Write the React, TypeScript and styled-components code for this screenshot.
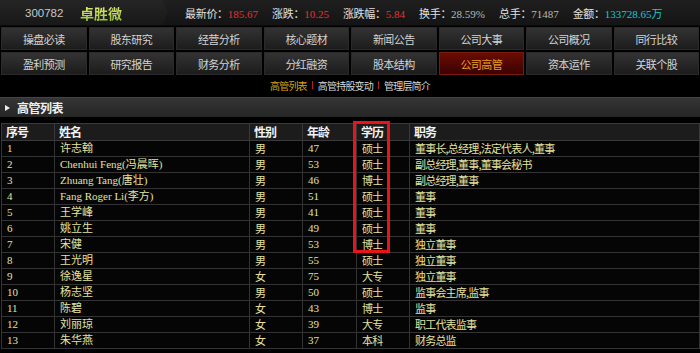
import React from "react";
import styled, { createGlobalStyle } from "styled-components";

const GlobalStyle = createGlobalStyle`
	html, body {
		margin: 0;
		padding: 0;
		background: #000;
	}
	body {
		font-family: "Noto Sans CJK SC", "Liberation Sans", sans-serif;
		font-size: 12px;
		color: #ddd;
	}
`;

const Page = styled.div`
	width: 700px;
	height: 353px;
	background: #000;
	overflow: hidden;
`;

const TopBar = styled.div`
	display: flex;
	align-items: center;
	height: 25px;
	background: linear-gradient(#1f1f1f, #141414);
	border-bottom: 1px solid #0a0a0a;
`;

const StockPanel = styled.div`
	display: flex;
	align-items: center;
	flex: 0 0 168px;
	height: 100%;
	padding-left: 25px;
	box-sizing: border-box;
	background: linear-gradient(#252525, #181818);
	clip-path: polygon(0 0, 162px 0, 168px 50%, 162px 100%, 0 100%);
`;

const StockCode = styled.span`
	font-family: "Liberation Sans", "DejaVu Sans", sans-serif;
	font-size: 11.5px;
	color: #c8c8c8;
	width: 55px;
`;

const StockName = styled.span`
	font-size: 14px;
	font-weight: bold;
	background: linear-gradient(#f2f27a, #8cbf3a);
	-webkit-background-clip: text;
	background-clip: text;
	color: transparent;
`;

const QuoteList = styled.div`
	display: flex;
	align-items: center;
	gap: 14px;
	margin-left: 17px;
`;

const Quote = styled.span`
	font-size: 11px;
	letter-spacing: -0.3px;
	color: #e0e0e0;
	white-space: nowrap;
`;

const QuoteValue = styled.span<{ $color: string }>`
	font-family: "Liberation Serif", "Noto Sans CJK SC", serif;
	font-size: 11px;
	letter-spacing: 0;
	color: ${({ $color }) => $color};
`;

const NavGrid = styled.div`
	display: grid;
	grid-template-columns: repeat(8, 1fr);
	grid-auto-rows: 23px;
	gap: 2px;
	padding: 1px 1px 0 1px;
`;

const NavButton = styled.div<{ $active?: boolean }>`
	display: flex;
	align-items: center;
	justify-content: center;
	font-size: 11px;
	letter-spacing: -0.6px;
	color: ${({ $active }) => ($active ? "#e8a020" : "#d4d4d4")};
	background: ${({ $active }) =>
		$active
			? "linear-gradient(#6a0c02, #3c0200)"
			: "linear-gradient(#333333, #1c1c1c)"};
	border: 1px solid ${({ $active }) => ($active ? "#7a1a0a" : "#2a2a2a")};
	box-sizing: border-box;
`;

const SubNav = styled.div`
	display: flex;
	justify-content: center;
	align-items: center;
	gap: 5px;
	height: 20px;
	font-size: 10px;
	letter-spacing: -0.8px;
	color: #d8d8d8;
`;

const SubLink = styled.span<{ $active?: boolean }>`
	color: ${({ $active }) => ($active ? "#d9a21c" : "#d8d8d8")};
`;

const SubSep = styled.span`
	width: 1px;
	height: 8px;
	background: #b02020;
`;

const SectionBar = styled.div`
	display: flex;
	align-items: center;
	gap: 7px;
	height: 19px;
	margin-top: 2px;
	padding-left: 5px;
	background: linear-gradient(#353535, #262626);
	border-top: 1px solid #444;
	font-size: 12px;
	font-weight: bold;
	letter-spacing: -0.5px;
	color: #f0f0f0;
`;

const Triangle = styled.span`
	width: 0;
	height: 0;
	border-top: 3.5px solid transparent;
	border-bottom: 3.5px solid transparent;
	border-left: 5px solid #eee;
`;

const TableWrap = styled.div`
	position: relative;
	margin: 6px 1px 0 1px;
`;

const Table = styled.table`
	width: 698px;
	border-collapse: collapse;
	table-layout: fixed;
`;

const HeadCell = styled.th`
	height: 16px;
	padding: 0 0 0 4px;
	text-align: left;
	font-size: 12px;
	font-weight: bold;
	letter-spacing: -1px;
	color: #f2f2f2;
	background: #1c1c1c;
	border: 1px solid #3a3a3a;
	line-height: 16px;
`;

const Cell = styled.td<{ $serif?: boolean }>`
	height: 15px;
	padding: 0 0 0 5px;
	font-family: ${({ $serif }) =>
		$serif
			? '"Liberation Serif", "Noto Sans CJK SC", serif'
			: '"Noto Sans CJK SC", "Liberation Serif", sans-serif'};
	font-size: 11px;
	letter-spacing: ${({ $serif }) => ($serif ? "0" : "-0.8px")};
	line-height: 15px;
	color: #e2e2a0;
	background: #050505;
	border: 1px solid #333;
	white-space: nowrap;
	overflow: hidden;
`;

const Highlight = styled.div`
	position: absolute;
	left: 352px;
	top: -2px;
	width: 37px;
	height: 132px;
	border: 3px solid #e8141a;
	box-sizing: border-box;
	pointer-events: none;
`;

const navItems = [
	"操盘必读", "股东研究", "经营分析", "核心题材", "新闻公告", "公司大事", "公司概况", "同行比较",
	"盈利预测", "研究报告", "财务分析", "分红融资", "股本结构", "公司高管", "资本运作", "关联个股",
];

const quotes = [
	{ label: "最新价：", value: "185.67", color: "#e83030" },
	{ label: "涨跌：", value: "10.25", color: "#e83030" },
	{ label: "涨跌幅：", value: "5.84", color: "#e83030" },
	{ label: "换手：", value: "28.59%", color: "#b8b8b8" },
	{ label: "总手：", value: "71487", color: "#b8b8b8" },
	{ label: "金额：", value: "133728.65万", color: "#19c6d6" },
];

const managers = [
	["1", "许志翰", "男", "47", "硕士", "董事长,总经理,法定代表人,董事"],
	["2", "Chenhui Feng(冯晨晖)", "男", "53", "硕士", "副总经理,董事,董事会秘书"],
	["3", "Zhuang Tang(唐壮)", "男", "46", "博士", "副总经理,董事"],
	["4", "Fang Roger Li(李方)", "男", "51", "硕士", "董事"],
	["5", "王学峰", "男", "41", "硕士", "董事"],
	["6", "姚立生", "男", "49", "硕士", "董事"],
	["7", "宋健", "男", "53", "博士", "独立董事"],
	["8", "王光明", "男", "55", "硕士", "独立董事"],
	["9", "徐逸星", "女", "75", "大专", "独立董事"],
	["10", "杨志坚", "男", "50", "硕士", "监事会主席,监事"],
	["11", "陈碧", "女", "43", "博士", "监事"],
	["12", "刘丽琼", "女", "39", "大专", "职工代表监事"],
	["13", "朱华燕", "女", "37", "本科", "财务总监"],
];

const columns = [
	{ title: "序号", width: 53 },
	{ title: "姓名", width: 195 },
	{ title: "性别", width: 53 },
	{ title: "年龄", width: 54 },
	{ title: "学历", width: 53 },
	{ title: "职务", width: 290 },
];

const App = () => (
	<Page>
		<GlobalStyle />
		<TopBar>
			<StockPanel>
				<StockCode>300782</StockCode>
				<StockName>卓胜微</StockName>
			</StockPanel>
			<QuoteList>
				{quotes.map((q) => (
					<Quote key={q.label}>
						{q.label}
						<QuoteValue $color={q.color}>{q.value}</QuoteValue>
					</Quote>
				))}
			</QuoteList>
		</TopBar>
		<NavGrid>
			{navItems.map((item) => (
				<NavButton key={item} $active={item === "公司高管"}>
					{item}
				</NavButton>
			))}
		</NavGrid>
		<SubNav>
			<SubLink $active>高管列表</SubLink>
			<SubSep />
			<SubLink>高管持股变动</SubLink>
			<SubSep />
			<SubLink>管理层简介</SubLink>
		</SubNav>
		<SectionBar>
			<Triangle />
			高管列表
		</SectionBar>
		<TableWrap>
			<Table>
				<colgroup>
					{columns.map((c) => (
						<col key={c.title} style={{ width: c.width }} />
					))}
				</colgroup>
				<thead>
					<tr>
						{columns.map((c) => (
							<HeadCell key={c.title}>{c.title}</HeadCell>
						))}
					</tr>
				</thead>
				<tbody>
					{managers.map((row) => (
						<tr key={row[0]}>
							<Cell $serif>{row[0]}</Cell>
							<Cell $serif>{row[1]}</Cell>
							<Cell>{row[2]}</Cell>
							<Cell $serif>{row[3]}</Cell>
							<Cell>{row[4]}</Cell>
							<Cell>{row[5]}</Cell>
						</tr>
					))}
				</tbody>
			</Table>
			<Highlight />
		</TableWrap>
	</Page>
);

export default App;
